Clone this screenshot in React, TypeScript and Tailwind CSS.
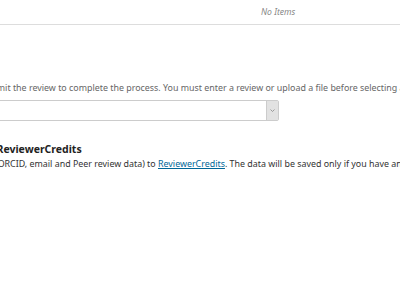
import React from "react";

export default function App() {
  return (
    <div
      className="w-[400px] h-[284px] overflow-hidden bg-white text-[#555]"
      style={{ fontFamily: '"Noto Sans", sans-serif' }}
    >
      <div className="h-[25px] border-b border-[#ddd] flex items-center">
        <div className="w-[261px]" />
        <span className="italic text-[8.6px] text-[#888]">No Items</span>
      </div>

      <div className="mt-[57px] whitespace-nowrap text-[8.9px] leading-[12px] text-[#666] ml-[-19px]">
        Submit the review to complete the process. You must enter a review or upload a file before selecting a recommendation.
      </div>

      <div className="mt-[6px] ml-[-40px] flex">
        <div className="w-[319px] h-[21px] border border-[#ccc] rounded-[2px] flex justify-end bg-white">
          <div className="w-[12px] h-full bg-[#e2e2e2] border-l border-[#ccc] flex items-center justify-center">
            <svg width="5" height="3" viewBox="0 0 5 3">
              <path d="M0.5 0.5 L2.5 2.5 L4.5 0.5" fill="none" stroke="#888" strokeWidth="0.8" />
            </svg>
          </div>
        </div>
      </div>

      <div className="mt-[21px] whitespace-nowrap text-[10.5px] leading-[14px] font-bold text-[#222] ml-[-3.5px]">
        ReviewerCredits
      </div>
      <div className="mt-[1px] whitespace-nowrap text-[8.9px] leading-[13px] text-[#333] ml-[-5px]">
        (ORCID, email and Peer review data) to{" "}
        <a className="text-[#006798] underline" href="#">
          ReviewerCredits
        </a>
        . The data will be saved only if you have an account.
      </div>
    </div>
  );
}
